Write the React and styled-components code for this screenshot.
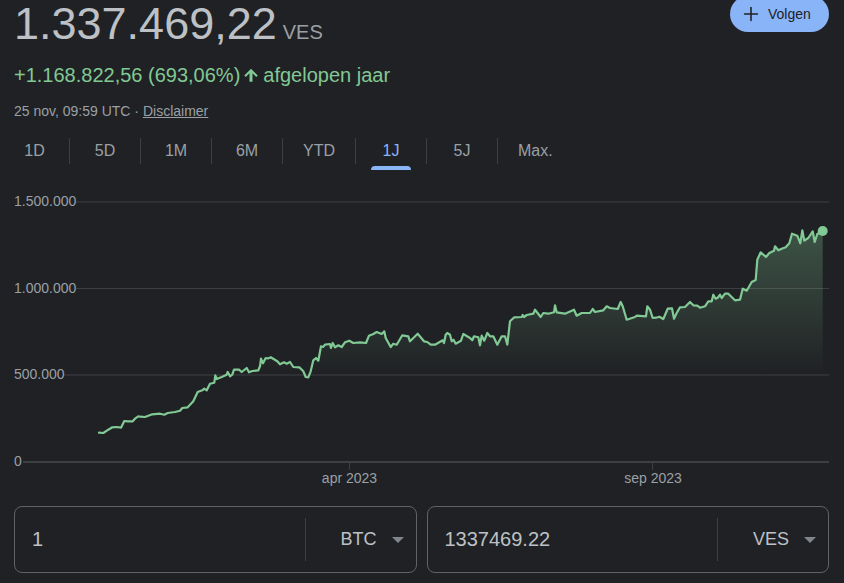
import React from "react";
import styled, { createGlobalStyle } from "styled-components";
import { Plus } from "lucide-react";

const RANGES = ["1D", "5D", "1M", "6M", "YTD", "1J", "5J", "Max."];

const LINE = [
  [99, 434.7], [103.3, 435], [108.3, 431.7], [112.3, 429.3], [116.7, 429], [121, 429.7], [124.3, 423], [128, 423.3],
  [132.7, 423.3], [135, 420.7], [138.3, 418.3], [140, 418.7], [145, 419], [148.3, 417.7], [152.3, 416.3], [160, 415.7],
  [164.3, 416.7], [167.7, 415], [175, 414], [180, 412.7], [182.3, 410], [187.7, 409.3], [193.3, 403.3], [197.7, 394],
  [202.3, 392.3], [204.3, 390.7], [206.7, 392.3], [210, 385.7], [214.3, 384.7], [215.3, 377.3], [216.7, 381], [221.7, 379],
  [226.7, 376.7], [227.7, 374], [230, 378.3], [232.3, 376.7], [234, 371.7], [239, 371.7], [241.7, 374], [246.7, 370],
  [249, 374.3], [252.3, 373], [258.3, 372.3], [260, 368.3], [261, 360.7], [263, 365.3], [265.7, 360], [268, 360.5],
  [270.7, 359.3], [277.3, 363.3], [280, 366.3], [284, 364.3], [286.7, 365.7], [290, 364], [293.3, 369], [299.3, 369.3],
  [303.3, 373.3], [305.7, 379], [308.3, 379.3], [310.7, 373.3], [313.3, 362.3], [316, 360], [318.3, 362.7], [321, 348.3],
  [323, 349], [325, 346.7], [330, 346], [331, 350], [332.7, 345], [335, 349.3], [338.3, 347.3], [341.7, 349],
  [345, 344.3], [349.3, 342.7], [353.3, 345], [360, 344.3], [366, 345], [369, 337.7], [373.3, 336], [376.7, 334],
  [381.7, 336], [384.3, 333.3], [385.7, 340], [390.7, 349], [393.3, 345.7], [396.7, 346.7], [402.3, 337.3], [408.3, 338.3],
  [410, 343.3], [417.7, 335.7], [424, 343.3], [427.3, 344], [430.7, 346.7], [435, 346.7], [442.7, 342.3], [444, 345],
  [445.7, 336.7], [447.3, 335], [450, 336.7], [451.7, 343.3], [453.5, 341.7], [455.7, 345.7], [461, 342.7], [463.3, 336],
  [470, 340], [472.3, 342.3], [474, 338.3], [478.3, 339.3], [480, 347.3], [481.7, 337.7], [484.3, 342.7], [487.3, 335],
  [490, 338.3], [493.3, 338.3], [497.3, 346.7], [501.7, 338.3], [505, 338.3], [507.3, 346.7], [510, 323.3], [514.3, 319.3],
  [521.7, 319], [522.7, 317], [524, 319], [526.7, 317], [533.3, 315.7], [535, 311.7], [540.7, 319], [543.3, 315],
  [548.3, 315.7], [554, 314.3], [555, 307.3], [556.7, 314.3], [565, 315.7], [574, 311.7], [576.7, 317.7], [581.7, 315],
  [590, 315], [592.7, 311], [595, 314], [603.3, 312.3], [606.7, 308.3], [610, 310], [617.7, 311], [620.7, 304],
  [622.7, 308.3], [626.7, 321.7], [635, 319], [636.7, 317.7], [646, 318.3], [647.3, 308.3], [650, 311.7], [652.7, 320],
  [656, 319.7], [659.3, 318.7], [663.3, 321], [667.7, 310.7], [672, 310.3], [674, 320.7], [676.7, 315], [680, 309.3],
  [685, 309], [690, 304], [693.3, 307.3], [697.3, 307.7], [700, 309.7], [705, 308.3], [708.3, 303.3], [711.7, 303.3],
  [713.3, 296.7], [715.7, 300.7], [718, 299.5], [720, 296.7], [721.7, 300], [725, 295.7], [728.3, 295.7], [735, 302.3],
  [740, 301.7], [742.7, 290.7], [746.7, 292.7], [751.7, 284], [755.7, 282], [757.3, 261.7], [760.7, 254.3], [766, 259],
  [769.3, 255], [774, 252.7], [775, 248.3], [778.3, 252.3], [781.7, 250.7], [785.7, 249.3], [789.3, 245.3], [792, 235.7],
  [797.3, 237.7], [800.3, 245.3], [802.3, 232.3], [804.3, 242.7], [808.3, 240], [812.7, 233.3], [814.7, 244], [817.3, 236],
  [822.7, 232.7],
];

const GRID = [
  { y: 204, label: "1.500.000", from: 76 },
  { y: 290.5, label: "1.000.000", from: 76 },
  { y: 377, label: "500.000", from: 64 },
];

const linePath = LINE.map(([x, y], i) => `${i ? "L" : "M"}${x} ${y}`).join(" ");
const areaPath = `${linePath} L822.7 464 L99 464 Z`;

const GlobalStyle = createGlobalStyle`
  html, body {
    margin: 0;
    height: 100%;
    overflow: hidden;
    background: #202124;
  }
  body {
    font-family: "Liberation Sans", Arial, sans-serif;
  }
`;

const Page = styled.div`
  margin-top: -4px;
  color: #bdc1c6;
`;

const Header = styled.header`
  display: flex;
  justify-content: space-between;
  align-items: flex-start;
  padding: 0 15px 0 14px;
`;

const Price = styled.div`
  display: flex;
  align-items: baseline;
  gap: 6px;
  margin-top: 3px;
  height: 50px;
  line-height: 50px;
  font-size: 45px;
`;

const Unit = styled.span`
  font-size: 20px;
  color: #9aa0a6;
`;

const FollowButton = styled.button`
  display: flex;
  align-items: center;
  width: 99px;
  height: 36px;
  padding: 0 0 0 10px;
  border: 0;
  border-radius: 18px;
  background: #8ab4f8;
  color: #202124;
  font: 14px "Liberation Sans", Arial, sans-serif;

  svg {
    margin-right: 6px;
  }
`;

const Change = styled.div`
  display: flex;
  align-items: center;
  height: 28px;
  margin-top: 12px;
  padding-left: 14px;
  font-size: 20px;
  color: #81c995;

  svg {
    margin: 0 3px 0 2px;
  }
`;

const Meta = styled.div`
  margin-top: 12px;
  padding-left: 14px;
  height: 20px;
  line-height: 20px;
  font-size: 14px;
  color: #9aa0a6;

  a {
    color: inherit;
    text-decoration: underline;
  }
`;

const Tabs = styled.nav`
  display: flex;
  margin-top: 17px;
  height: 33px;
`;

const Tab = styled.div`
  position: relative;
  display: flex;
  justify-content: center;
  box-sizing: border-box;
  min-width: 71px;
  height: 26px;
  padding: 0 20px;
  line-height: 26px;
  font-size: 16px;
  color: ${(p) => (p.$active ? "#8ab4f8" : "#9aa0a6")};
  border-right: ${(p) => (p.$last ? "0" : "1px solid #3c4043")};

  &:first-child {
    min-width: 70px;
  }

  ${(p) =>
    p.$active &&
    `&::after {
      content: "";
      position: absolute;
      left: 15px;
      right: 15px;
      bottom: -6px;
      height: 4px;
      border-radius: 4px 4px 0 0;
      background: #8ab4f8;
    }`}
`;

const ChartSvg = styled.svg`
  display: block;
  margin-top: 11px;

  text {
    font-family: "Liberation Sans", Arial, sans-serif;
    font-size: 14px;
    fill: #9aa0a6;
  }
`;

const Converter = styled.div`
  display: flex;
  gap: 10px;
  padding: 0 15px 0 14px;
  margin-top: 14px;
`;

const Field = styled.div`
  flex: 1;
  display: flex;
  align-items: center;
  box-sizing: border-box;
  height: 67px;
  border: 1px solid #5f6368;
  border-radius: 8px;
`;

const Amount = styled.div`
  flex: 1;
  padding-left: 17px;
  font-size: 20px;
`;

const Currency = styled.div`
  display: flex;
  align-items: center;
  justify-content: flex-end;
  box-sizing: border-box;
  width: 111px;
  height: 43px;
  padding-right: 12px;
  border-left: 1px solid #3c4043;
  font-size: 18px;

  &::after {
    content: "";
    margin-left: 15px;
    border-style: solid;
    border-width: 6px 6px 0;
    border-color: #80868b transparent transparent;
  }
`;

const UpArrow = () => (
  <svg width="18" height="18" viewBox="0 0 24 24" fill="#81c995">
    <path d="M3 12.5 5 14.5 10 9.5V21h4V9.5l5 5 2-2L12 3.5z" />
  </svg>
);

const Chart = () => (
  <ChartSvg width="844" height="310" viewBox="0 184 844 310">
    <defs>
      <linearGradient id="area" gradientUnits="userSpaceOnUse" x1="0" y1="233" x2="0" y2="376">
        <stop offset="0" stopColor="#81c995" stopOpacity="0.3" />
        <stop offset="1" stopColor="#81c995" stopOpacity="0" />
      </linearGradient>
    </defs>
    {GRID.map((g) => (
      <g key={g.label}>
        <text x="14" y={g.y + 4}>{g.label}</text>
        <line x1={g.from} x2="829" y1={g.y} y2={g.y} stroke="#3c4043" />
      </g>
    ))}
    <text x="14" y="468">0</text>
    <line x1="23" x2="829" y1="464" y2="464" stroke="#3c4043" strokeWidth="2" />
    <line x1="349.5" x2="349.5" y1="464" y2="472" stroke="#3c4043" />
    <line x1="652.5" x2="652.5" y1="464" y2="472" stroke="#3c4043" />
    <text x="349.5" y="485" textAnchor="middle">apr 2023</text>
    <text x="653" y="485" textAnchor="middle">sep 2023</text>
    <path d={areaPath} fill="url(#area)" />
    <path d={linePath} fill="none" stroke="#81c995" strokeWidth="2.2" strokeLinejoin="round" strokeLinecap="round" />
    <circle cx="822.7" cy="233" r="5" fill="#81c995" />
  </ChartSvg>
);

const App = () => (
  <Page>
    <GlobalStyle />
    <Header>
      <Price>
        1.337.469,22 <Unit>VES</Unit>
      </Price>
      <FollowButton>
        <Plus size={22} strokeWidth={1.7} />
        Volgen
      </FollowButton>
    </Header>
    <Change>
      +1.168.822,56 (693,06%)
      <UpArrow />
      afgelopen jaar
    </Change>
    <Meta>
      25 nov, 09:59 UTC · <a>Disclaimer</a>
    </Meta>
    <Tabs>
      {RANGES.map((r, i) => (
        <Tab key={r} $active={r === "1J"} $last={i === RANGES.length - 1}>
          {r}
        </Tab>
      ))}
    </Tabs>
    <Chart />
    <Converter>
      <Field>
        <Amount>1</Amount>
        <Currency>BTC</Currency>
      </Field>
      <Field>
        <Amount>1337469.22</Amount>
        <Currency>VES</Currency>
      </Field>
    </Converter>
  </Page>
);

export default App;
